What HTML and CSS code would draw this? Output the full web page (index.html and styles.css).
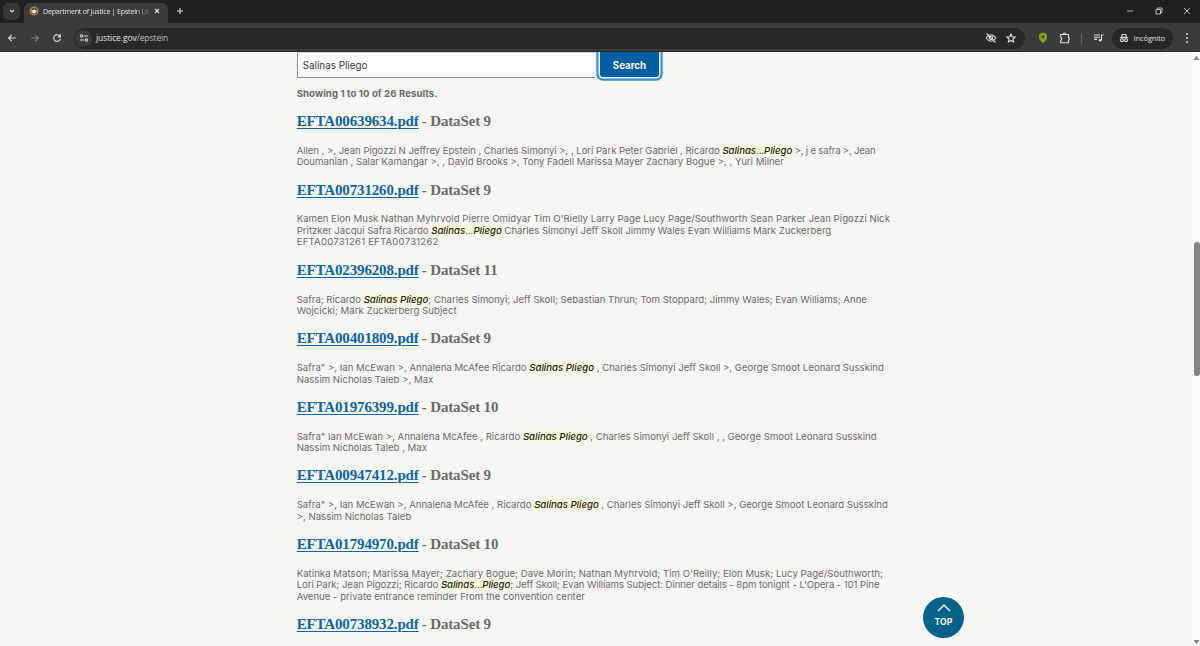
FILE: index.html
```html
<!DOCTYPE html>
<html lang="en">
<head>
<meta charset="utf-8">
<title>Department of Justice | Epstein Library</title>
<link rel="stylesheet" href="styles.css">
</head>
<body>
<header class="browser">
  <div class="tabs">
    <div class="tab-search"><svg width="8" height="8" viewBox="0 0 8 8"><path d="M2 3l2 2 2-2"/></svg></div>
    <div class="tab">
      <svg class="favicon" width="10" height="10" viewBox="0 0 10 10"><circle cx="5" cy="5" r="4.6" fill="#a18c6b" stroke="#5c5040" stroke-width=".8"/><circle cx="5" cy="5" r="3" fill="#4b4135" stroke="none"/><path d="M2.2 3.8l2 .8 1-1.5.8 1.5 1.7-.6-.7 2.6-2 .8-2-.8z" fill="#f0e8da" stroke="none"/></svg>
      <span class="tab-title">Department of Justice | Epstein Lib</span>
      <svg width="8" height="8" viewBox="0 0 8 8"><path d="M2 2l4 4M6 2L2 6"/></svg>
    </div>
    <svg class="new-tab" width="8" height="8" viewBox="0 0 8 8"><path d="M4 1v6M1 4h6"/></svg>
    <div class="window-buttons">
      <svg width="8" height="8" viewBox="0 0 8 8"><path d="M1 4h6"/></svg>
      <svg width="8" height="8" viewBox="0 0 8 8"><path d="M1 2.5h4.5V7H1zM2.5 2.5V1H7v4.5H5.5"/></svg>
      <svg width="8" height="8" viewBox="0 0 8 8"><path d="M1 1l6 6M7 1L1 7"/></svg>
    </div>
  </div>
  <div class="toolbar">
    <div class="nav">
      <svg width="10" height="10" viewBox="0 0 10 10"><path d="M8.7 5H1.6M4.8 1.8L1.6 5l3.2 3.2"/></svg>
      <svg class="dim" width="10" height="10" viewBox="0 0 10 10"><path d="M1.3 5h7.1M5.2 1.8L8.4 5 5.2 8.2"/></svg>
      <svg width="10" height="10" viewBox="0 0 10 10"><path d="M8.1 3.5A3.4 3.4 0 1 0 8.4 5.7M8.4 1.3v2.6H5.8"/></svg>
    </div>
    <div class="omnibox">
      <span class="site"><svg width="10" height="10" viewBox="0 0 10 10"><path d="M5 3h4M1 7h4"/><circle cx="2.6" cy="3" r="1.2"/><circle cx="7.4" cy="7" r="1.2"/></svg></span>
      <span class="url">justice.gov<span class="path">/epstein</span></span>
      <svg width="12" height="12" viewBox="0 0 12 12"><path d="M1 6q5-6.4 10 0-5 6.4-10 0M1.5 1.5l9 9"/><circle cx="6" cy="6" r="1.7"/></svg>
      <svg class="star" width="10" height="10" viewBox="0 0 10 10"><path d="M5 1l1.2 2.7 3 .3L7 6l.6 2.9L5 7.4 2.4 8.9 3 6 .8 4l3-.3z"/></svg>
    </div>
    <svg class="pin" width="10" height="12" viewBox="0 0 10 12"><path d="M5 .8a4.1 4.1 0 0 0-4.1 4.1C.9 7.7 5 11.3 5 11.3s4.1-3.6 4.1-6.4A4.1 4.1 0 0 0 5 .8z" fill="#76a915" stroke="none"/><circle cx="5" cy="4.8" r="1.5" fill="#34480f" stroke="none"/></svg>
    <svg class="puzzle" width="12" height="12" viewBox="0 0 12 12"><path d="M1.7 2.5h7.8v3.1a1.3 1.3 0 0 1 0 2.5v2.7H1.7V8.3a1.5 1.5 0 0 0 0-2.8zM4.2 2.3a1.3 1.3 0 0 1 2.7 0"/></svg>
    <span class="rule"></span>
    <svg class="media" width="11" height="10" viewBox="0 0 11 10"><path d="M1 2h6M1 4.2h6M1 6.4h3M8.5 7V2h2"/><circle cx="7.2" cy="7.2" r="1.3" fill="#dedede" stroke="none"/></svg>
    <div class="incognito">
      <svg width="10" height="10" viewBox="0 0 10 10"><path d="M.8 4.7h8.4M4.3 7h1.4"/><path d="M2.5 4.4L3.2 1.5h3.6l.7 2.9z"/><circle cx="2.9" cy="7.2" r="1.4"/><circle cx="7.1" cy="7.2" r="1.4"/></svg>
      <span>Incógnito</span>
    </div>
    <svg class="more" width="4" height="12" viewBox="0 0 4 12"><g fill="#ddd" stroke="none"><circle cx="2" cy="2" r="1"/><circle cx="2" cy="6" r="1"/><circle cx="2" cy="10" r="1"/></g></svg>
  </div>
</header>
<div class="viewport">
  <main class="page">
    <form class="search">
      <div class="field">Salinas Pliego</div>
      <div class="button">Search</div>
    </form>
    <p class="count">Showing 1 to 10 of 26 Results.</p>
    <article><h3><a>EFTA00639634.pdf</a> <span>- DataSet 9</span></h3>
      <p><span class="snug">Allen , &gt;, Jean Pigozzi N Jeffrey Epstein , Charles Simonyi &gt;, , Lori Park Peter Gabriel , Ricardo <mark><em>Salinas</em>...<em>Pliego</em></mark></span><span class="tighter"> &gt;, j e safra &gt;, Jean</span><br>Doumanian , Salar Kamangar &gt;, , David Brooks &gt;, Tony Fadell Marissa Mayer Zachary Bogue &gt;, , Yuri Milner</p></article>
    <article><h3><a>EFTA00731260.pdf</a> <span>- DataSet 9</span></h3>
      <p><span class="loose">Kamen Elon Musk Nathan Myhrvold Pierre Omidyar Tim O'Rielly Larry Page Lucy Page/Southworth Sean Parker Jean Pigozzi Nick</span><br>Pritzker Jacqui Safra Ricardo <mark><em>Salinas</em>...<em>Pliego</em></mark> Charles Simonyi Jeff Skoll Jimmy Wales Evan Williams Mark Zuckerberg<br><span class="codes">EFTA00731261 EFTA00731262</span></p></article>
    <article><h3><a>EFTA02396208.pdf</a> <span>- DataSet 11</span></h3>
      <p>Safra; Ricardo <mark><em>Salinas Pliego</em></mark>; Charles Simonyi; Jeff Skoll; Sebastian Thrun; Tom Stoppard; Jimmy Wales; Evan Williams; Anne<br><span class="loose">Wojcicki; Mark Zuckerberg Subject</span></p></article>
    <article><h3><a>EFTA00401809.pdf</a> <span>- DataSet 9</span></h3>
      <p>Safra" &gt;, Ian McEwan &gt;, Annalena McAfee Ricardo <mark><em>Salinas Pliego</em></mark> , Charles Simonyi Jeff Skoll &gt;, George Smoot Leonard Susskind<br>Nassim Nicholas Taleb &gt;, Max</p></article>
    <article><h3><a>EFTA01976399.pdf</a> <span>- DataSet 10</span></h3>
      <p>Safra" Ian McEwan &gt;, Annalena McAfee , Ricardo <mark><em>Salinas Pliego</em></mark> , Charles Simonyi Jeff Skoll , , George Smoot Leonard Susskind<br>Nassim Nicholas Taleb , Max</p></article>
    <article><h3><a>EFTA00947412.pdf</a> <span>- DataSet 9</span></h3>
      <p><span class="close">Safra" &gt;, Ian McEwan &gt;, Annalena McAfee , Ricardo <mark><em>Salinas Pliego</em></mark> , Charles Simonyi Jeff Skoll &gt;, George Smoot Leonard Susskind</span><br>&gt;, Nassim Nicholas Taleb</p></article>
    <article><h3><a>EFTA01794970.pdf</a> <span>- DataSet 10</span></h3>
      <p><span class="loose">Katinka Matson; Marissa Mayer; Zachary Bogue; Dave Morin; Nathan Myhrvold; Tim O'Reilly; Elon Musk; Lucy Page/Southworth;</span><br><span class="tight">Lori Park; Jean Pigozzi; Ricardo <mark><em>Salinas</em>...<em>Pliego</em></mark>; Jeff Skoll; Evan Williams Subject: Dinner details - 8pm tonight - L'Opera - 101 Pine</span><br>Avenue - private entrance reminder From the convention center</p></article>
    <article><h3><a>EFTA00738932.pdf</a> <span>- DataSet 9</span></h3></article>
  </main>
  <div class="scrollbar">
    <svg width="8" height="6" viewBox="0 0 8 6"><path d="M4.5 .8L7.5 5h-6z" fill="#858585" stroke="none"/></svg>
    <div class="thumb"></div>
    <svg class="down" width="8" height="6" viewBox="0 0 8 6"><path d="M4.5 5.2L7.5 1h-6z" fill="#858585" stroke="none"/></svg>
  </div>
  <a class="top"><svg width="14" height="8" viewBox="0 0 14 8"><path d="M1 7l6-6 6 6"/></svg><span>TOP</span></a>
</div>
</body>
</html>
```
FILE: styles.css
```css
* { box-sizing: border-box; }
body { margin: 0; width: 1200px; height: 646px; overflow: hidden; display: flex; flex-direction: column; background: #f6f6f2; font-family: Inter, sans-serif; }
svg { display: block; flex: none; fill: none; stroke: #dedede; stroke-width: 1.1; }
.browser { height: 52px; flex: none; background: #3b3b3b; color: #e3e3e3; border-bottom: 1px solid #292929; }
.tabs { height: 23px; display: flex; align-items: center; background: #1f2120; }
.tab-search { width: 17px; height: 17px; margin: 0 0 1px 3px; border-radius: 5px; background: #353636; display: grid; place-items: center; }
.tab { width: 144px; height: 20px; margin: 3px 0 0 4px; padding: 0 6px 4px 5px; border-radius: 6px 6px 0 0; background: #3b3b3b; display: flex; align-items: center; }
.tab-title { width: 105px; margin: 0 5px 0 4px; white-space: nowrap; font: 7.2px/12px "Open Sans", sans-serif; letter-spacing: -.27px; -webkit-mask-image: linear-gradient(90deg, #000 88%, rgba(0,0,0,.25)); mask-image: linear-gradient(90deg, #000 88%, rgba(0,0,0,.25)); }
.new-tab { margin: 0 0 1px 8px; }
.window-buttons { margin: 0 9px 1px auto; display: flex; gap: 20.5px; }
.window-buttons svg { stroke-width: .8; }
.toolbar { height: 29px; padding-top: 1px; display: flex; align-items: center; }
.nav { width: 74px; padding-left: 7px; display: flex; gap: 12.5px; }
.dim { stroke: #838383; }
.omnibox { width: 951px; height: 21px; padding: 0 9px 0 1px; border-radius: 11px; background: #282828; display: flex; align-items: center; }
.site { width: 17px; height: 17px; border-radius: 50%; background: #3b3b3b; display: grid; place-items: center; }
.url { margin: 0 auto 0 4px; font: 8.5px/12px "Open Sans", sans-serif; letter-spacing: -.09px; }
.path { color: #bdbdbd; }
.star { margin-left: 9px; }
.pin { margin-left: 12.5px; }
.puzzle { margin-left: 11.5px; }
.rule { width: 1px; height: 11px; margin-left: 10px; background: #686868; }
.media { margin-left: 11px; }
.incognito { width: 61px; height: 21px; margin-left: 8px; padding-left: 7px; border-radius: 11px; background: #272727; display: flex; align-items: center; gap: 4.5px; font: 7.3px/12px "Open Sans", sans-serif; }
.more { margin-left: 12px; }
.viewport { position: relative; flex: 1; min-height: 0; display: flex; justify-content: space-between; overflow: hidden; }
.page { width: 900px; padding-left: 296.7px; color: #6b6c6c; white-space: nowrap; }
.search { margin: 0; height: 36px; display: flex; }
.field { width: 298.6px; height: 26px; padding-left: 5px; background: #fff; border: 1px solid #8c8e8f; border-top-color: #d5d5d2; border-right: 0; color: #363636; font-size: 9.8px; line-height: 25px; letter-spacing: .03px; }
.button { width: 59px; height: 25px; margin-left: 4.7px; border-radius: 0 0 3px 3px; background: #005ea2; box-shadow: 0 0 0 1.5px #f5f8fa, 0 0 0 3.7px #328ddd; color: #fff; font-weight: 700; font-size: 9.7px; line-height: 27px; text-align: center; }
.count { margin: 0 0 12px; font-size: 9.6px; line-height: 11px; font-weight: 700; letter-spacing: .08px; }
article { height: 68.6px; }
article:nth-of-type(2), article:nth-of-type(7) { height: 80.1px; }
h3 { margin: 0; font: 700 15px/20px "Liberation Serif", serif; letter-spacing: -.15px; white-space: nowrap; display: flex; gap: 3.2px; }
h3 a { color: #0f65a3; text-decoration: underline; text-decoration-thickness: 1.3px; text-underline-offset: 1.5px; }
article p { margin: 13.9px 0 0; font-size: 9.6px; line-height: 11.5px; }
.tight { letter-spacing: -.075px; }
.tighter { letter-spacing: -.2px; }
.snug { letter-spacing: -.045px; }
.close { letter-spacing: -.012px; }
.loose { letter-spacing: .04px; }
.codes { letter-spacing: .2px; }
mark { background: #fbfbd9; color: inherit; }
mark em { color: #20201c; font-weight: 500; }
.scrollbar { width: 8px; padding-top: 3px; background: #fcfcfc; display: flex; flex-direction: column; }
.thumb { width: 6px; height: 134px; margin: 181px 0 auto 2px; border-radius: 3px; background: #858585; }
.down { margin-bottom: 1px; }
.top { position: absolute; left: 923px; top: 545px; width: 41px; height: 41px; border-radius: 50%; background: #04628b; color: #fff; display: flex; flex-direction: column; align-items: center; padding-top: 7px; font-size: 8.7px; line-height: 12px; font-weight: 700; }
.top svg { stroke: #fff; stroke-width: 1.4; }
.top span { margin-top: 4px; }
```
